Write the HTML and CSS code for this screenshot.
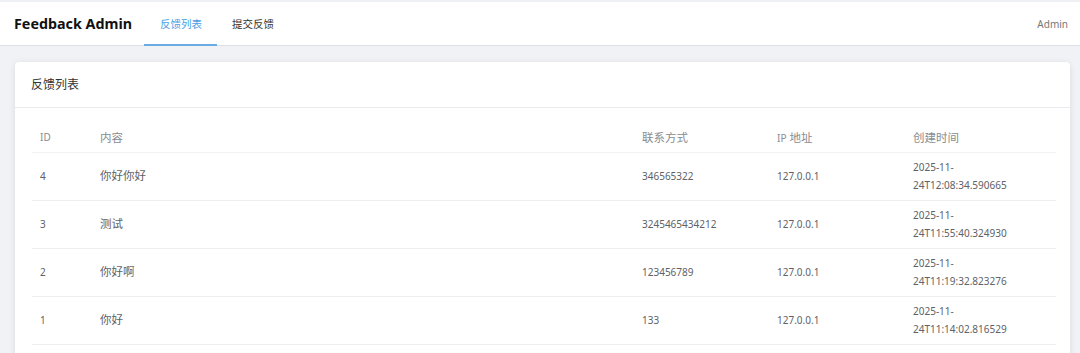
FILE: index.html
```html
<!DOCTYPE html>
<html><head>
    <meta charset="UTF-8">
    <meta name="viewport" content="width=device-width, initial-scale=1.0">
    <title>Feedback Admin</title>
    <link rel="stylesheet" href="styles.css"></head><body>
<header class="topbar">
    <div class="brand">Feedback Admin</div>
    <nav class="nav">
        <a class="nav-item active">反馈列表</a>
        <a class="nav-item">提交反馈</a>
    </nav>
    <div class="user">Admin</div>
</header>

<div class="container">
    <div class="card">
        <div class="card-header">反馈列表</div>
        <div class="card-body">
            <table class="feedback-table">
                <thead>
                    <tr>
                        <th class="col-id"><span class="latin">ID</span></th>
                        <th class="col-content">内容</th>
                        <th class="col-contact">联系方式</th>
                        <th class="col-ip"><span class="latin">IP</span> 地址</th>
                        <th class="col-time">创建时间</th>
                    </tr>
                </thead>
                <tbody>
                    <tr>
                        <td class="num">4</td>
                        <td>你好你好</td>
                        <td class="num">346565322</td>
                        <td class="num">127.0.0.1</td>
                        <td class="num">2025-11-<br>24T12:08:34.590665</td>
                    </tr>
                    <tr>
                        <td class="num">3</td>
                        <td>测试</td>
                        <td class="num">3245465434212</td>
                        <td class="num">127.0.0.1</td>
                        <td class="num">2025-11-<br>24T11:55:40.324930</td>
                    </tr>
                    <tr>
                        <td class="num">2</td>
                        <td>你好啊</td>
                        <td class="num">123456789</td>
                        <td class="num">127.0.0.1</td>
                        <td class="num">2025-11-<br>24T11:19:32.823276</td>
                    </tr>
                    <tr>
                        <td class="num">1</td>
                        <td>你好</td>
                        <td class="num">133</td>
                        <td class="num">127.0.0.1</td>
                        <td class="num">2025-11-<br>24T11:14:02.816529</td>
                    </tr>
                </tbody>
            </table>
        </div>
    </div>
</div>
</body></html>
```

FILE: styles.css
```css
body {
    font-family: "Noto Sans", "Noto Sans CJK SC", sans-serif;
    margin: 0;
    padding: 0;
    background-color: #f0f2f5;
    color: #606266;
    font-size: 11.5px;
}
.topbar {
    background-color: white;
    border-top: 2px solid #eef0f3;
    border-bottom: 1px solid #dcdfe4;
    height: 43px;
    display: flex;
    align-items: stretch;
    padding: 0 12px 0 14px;
}
.brand {
    font-size: 14.3px;
    font-weight: bold;
    color: #111;
    display: flex;
    align-items: center;
    margin-right: 12px;
}
.nav {
    display: flex;
    flex-grow: 1;
}
.nav-item {
    display: flex;
    align-items: center;
    padding: 0 15px 0 16px;
    font-size: 10.5px;
    color: #333;
    border-bottom: 2px solid transparent;
    margin-bottom: -1px;
}
.nav-item.active {
    color: #4a9ee6;
    border-bottom-color: #6aa9e2;
}
.nav-item + .nav-item {
    padding-left: 15px;
}
.user {
    display: flex;
    align-items: center;
    font-size: 10px;
    color: #777;
}
.container {
    padding: 16px 10px 0 15px;
}
.card {
    background-color: white;
    border-radius: 4px;
    box-shadow: 0 1px 6px rgba(0,0,0,0.1);
}
.card-header {
    padding: 13px 16px 12px;
    font-size: 12px;
    line-height: 20px;
    color: #333;
    border-bottom: 1px solid #e8eaee;
}
.card-body {
    padding: 14px 14px 20px 17px;
}
.feedback-table {
    width: 100%;
    border-collapse: collapse;
    table-layout: fixed;
}
.feedback-table th,
.feedback-table td {
    box-sizing: border-box;
    text-align: left;
    padding: 0 8px;
}
.feedback-table th {
    font-weight: normal;
    color: #8a8c90;
    height: 30px;
    border-bottom: 1px solid #f2f2f2;
}
.feedback-table td {
    height: 48px;
    line-height: 18px;
    color: #606266;
    border-bottom: 1px solid #eeeeee;
}
.feedback-table .num,
.latin {
    font-size: 10px;
}
.col-id { width: 60px; }
.col-content { width: 542px; }
.col-contact { width: 135px; }
.col-ip { width: 136px; }
```
